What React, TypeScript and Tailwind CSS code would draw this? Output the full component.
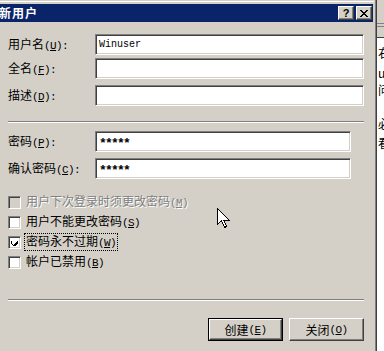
import React from "react";

const sunken =
  "border border-t-[#808080] border-l-[#808080] border-b-white border-r-white shadow-[inset_1px_1px_0_#404040,inset_-1px_-1px_0_#d4d0c8]";
const raised =
  "border border-t-white border-l-white border-b-[#404040] border-r-[#404040] shadow-[inset_-1px_-1px_0_#808080] bg-[#d4d0c8]";

function Mn({ k, colon }: { k: string; colon?: boolean }) {
  return (
    <span className="font-['Liberation_Mono',monospace] text-[11px] tracking-[-0.6px]">
      (<u>{k}</u>){colon ? ":" : ""}
    </span>
  );
}

function Field({ label, k, value, width, mt, pw }: { label: string; k: string; value?: string; width: string; mt: string; pw?: boolean }) {
  return (
    <div className={`flex items-center ${mt}`}>
      <div className="w-[95px] pl-[8px] whitespace-nowrap">
        {label}
        <Mn k={k} colon />
      </div>
      <div className={`${sunken} ${width} h-[21px] bg-white flex items-center pl-[3px]`}>
        {value && (
          <span
            className={
              pw
                ? "font-['Liberation_Mono',monospace] text-[13px] font-bold leading-none pt-[4px] tracking-[-1.8px]"
                : "font-['Liberation_Mono',monospace] text-[10px] leading-none"
            }
          >
            {value}
          </span>
        )}
      </div>
    </div>
  );
}

function Check({ label, k, checked, disabled, focus }: { label: string; k: string; checked?: boolean; disabled?: boolean; focus?: boolean }) {
  return (
    <div className="flex items-center h-[20px] pl-[8px]">
      <div className={`${sunken} w-[13px] h-[13px] ${disabled ? "bg-[#d4d0c8]" : "bg-white"} flex items-center justify-center`}>
        {checked && (
          <svg width="7" height="7" viewBox="0 0 7 7" shapeRendering="crispEdges">
            <path d="M0 2h1v3h1v1h1v-1h1v-1h1v-1h1v-1h1v3h-1v1h-1v1h-1v1h-1v-1h-1v-1h-1v-1h-1z" fill="#000" />
          </svg>
        )}
      </div>
      <div
        className={`ml-[4px] px-[1px] whitespace-nowrap ${focus ? "outline outline-1 outline-dotted outline-black" : ""} ${
          disabled ? "text-[#808080] [text-shadow:1px_1px_0_#fff]" : ""
        }`}
      >
        {label}
        <Mn k={k} />
      </div>
    </div>
  );
}

function Sep({ mt }: { mt: string }) {
  return <div className={`${mt} ml-[8px] w-[356px] h-[2px] border-t border-t-[#808080] border-b border-b-white`} />;
}

export default function App() {
  return (
    <div className="w-[384px] h-[351px] overflow-hidden flex bg-[#d4d0c8] font-['Noto_Sans_CJK_SC',sans-serif] text-[12px] leading-[14px] text-black">
      <div className="relative w-[377px] shrink-0 flex flex-col border-r border-r-[#404040] shadow-[inset_-1px_0_0_#808080] bg-[#d4d0c8]">
        <div className="h-[1px]" />
        <div className="h-[1px] bg-white mr-[2px]" />
        <div className="h-[2px]" />
        {/* title bar */}
        <div className="h-[18px] mr-[3px] bg-[#0a246a] flex items-center justify-between pr-[1px]">
          <span className="text-white font-bold text-[12px] -ml-[1px] tracking-[1px]">新用户</span>
          <div className="flex gap-[2px]">
            <div className={`${raised} w-[16px] h-[14px] flex items-center justify-center`}>
              <span className="font-['Liberation_Sans',sans-serif] font-bold text-[11px] leading-none">?</span>
            </div>
            <div className={`${raised} w-[16px] h-[14px] flex items-center justify-center`}>
              <svg width="8" height="7" viewBox="0 0 8 7" shapeRendering="crispEdges">
                <path d="M0 0h2v1h1v1h2v-1h1v-1h2v1h-1v1h-1v1h-1v1h1v1h1v1h1v1h-2v-1h-1v-1h-2v1h-1v1h-2v-1h1v-1h1v-1h1v-1h-1v-1h-1v-1h-1z" fill="#000" />
              </svg>
            </div>
          </div>
        </div>

        <Field label="用户名" k="U" value="Winuser" width="w-[269px]" mt="mt-[12px]" />
        <Field label="全名" k="F" width="w-[269px]" mt="mt-[3px]" />
        <Field label="描述" k="D" width="w-[269px]" mt="mt-[6px]" />

        <Sep mt="mt-[15px]" />

        <Field label="密码" k="P" value="*****" width="w-[256px]" mt="mt-[8px]" pw />
        <Field label="确认密码" k="C" value="*****" width="w-[256px]" mt="mt-[6px]" pw />

        <div className="mt-[13px] flex flex-col">
          <Check label="用户下次登录时须更改密码" k="M" disabled />
          <Check label="用户不能更改密码" k="S" />
          <Check label="密码永不过期" k="W" checked focus />
          <Check label="帐户已禁用" k="B" />
        </div>

        <Sep mt="mt-[27px]" />

        <div className="mt-[17px] flex justify-end gap-[6px] pr-[12px]">
          <div className="border border-black w-[75px] h-[23px]">
            <div className={`${raised} w-full h-full flex items-center justify-center`}>
              创建<Mn k="E" />
            </div>
          </div>
          <div className={`${raised} w-[75px] h-[23px] flex items-center justify-center`}>
            关闭<Mn k="O" />
          </div>
        </div>

        {/* mouse pointer */}
        <svg className="absolute left-[217px] top-[208px]" width="13" height="21" viewBox="0 0 13 21" shapeRendering="crispEdges">
          <path d="M0.5 0.5 L0.5 16.5 L4.5 12.5 L7.5 19.5 L9.5 18.5 L6.8 12 L12 12 Z" fill="#fff" stroke="#000" strokeWidth="1" />
        </svg>
      </div>

      {/* window behind */}
      <div className="flex-1 flex flex-col overflow-hidden">
        <div className="h-[23px] bg-[#d4d0c8]" />
        <div className="h-[1px] bg-[#808080]" />
        <div className="h-[2px]" />
        <div className="h-[1px] bg-[#808080]" />
        <div className="h-[10px] bg-[#d4d0c8]" />
        <div className="h-[1px] bg-[#404040]" />
        <div className="flex-1 bg-white flex flex-col pl-[1px] leading-[12px] whitespace-nowrap">
          <span className="mt-[9px]">右</span>
          <span className="mt-[8px]">u</span>
          <span className="mt-[5px]">问</span>
          <span className="mt-[22px]">必</span>
          <span className="mt-[7px]">看</span>
        </div>
      </div>
    </div>
  );
}
